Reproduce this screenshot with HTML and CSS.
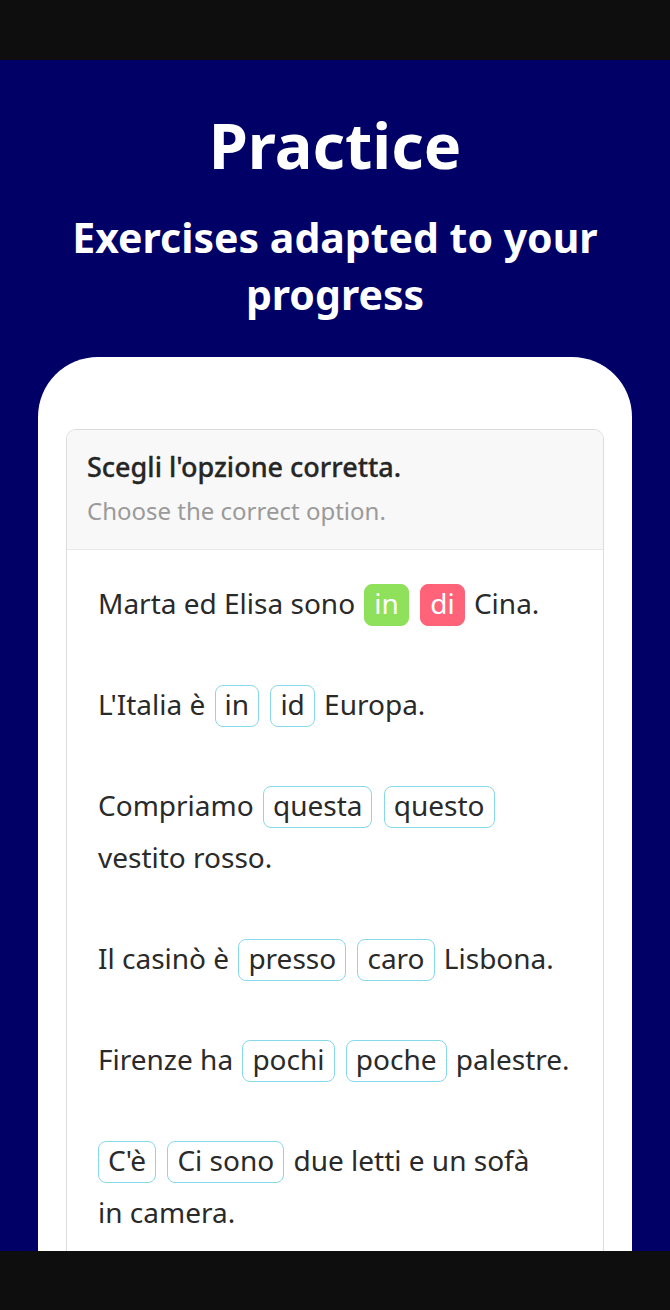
FILE: index.html
```html
<!DOCTYPE html>
<html lang="it">
<head>
<meta charset="utf-8">
<title>Practice</title>
<link rel="stylesheet" href="styles.css">
</head>
<body>
  <div class="statusbar"></div>
  <header class="hero">
    <h1 class="hero-title">Practice</h1>
    <p class="hero-sub">Exercises adapted to your progress</p>
  </header>
  <main class="sheet">
    <section class="card">
      <div class="card-head">
        <div class="card-title">Scegli l'opzione corretta.</div>
        <div class="card-hint">Choose the correct option.</div>
      </div>
      <div class="card-body">
        <p class="sentence">Marta ed Elisa sono <span class="chip chip-right">in</span> <span class="chip chip-wrong">di</span> Cina.</p>
        <p class="sentence">L'Italia è <span class="chip">in</span> <span class="chip">id</span> Europa.</p>
        <p class="sentence">Compriamo <span class="chip">questa</span> <span class="chip">questo</span> vestito rosso.</p>
        <p class="sentence">Il casinò è <span class="chip">presso</span> <span class="chip">caro</span> Lisbona.</p>
        <p class="sentence">Firenze ha <span class="chip">pochi</span> <span class="chip">poche</span> palestre.</p>
        <p class="sentence"><span class="chip chip-first">C'è</span> <span class="chip">Ci sono</span> due letti e un sofà<br>in camera.</p>
      </div>
    </section>
  </main>
  <div class="navbar"></div>
</body>
</html>
```
FILE: styles.css
```css
html, body {
  margin: 0;
  padding: 0;
}
body {
  width: 670px;
  height: 1310px;
  overflow: hidden;
  background: #000066;
  font-family: "Noto Sans", "Open Sans", sans-serif;
  position: relative;
}
.statusbar {
  height: 60px;
  background: #0e0e0e;
}
.hero {
  text-align: center;
  color: #ffffff;
  padding: 43px 20px 0;
}
.hero-title {
  margin: 0 0 22px;
  font-size: 63px;
  line-height: 84px;
  font-weight: 700;
}
.hero-sub {
  margin: 0;
  font-size: 41px;
  line-height: 57px;
  font-weight: 700;
}
.sheet {
  margin: 34px 38px 0;
  background: #ffffff;
  border-radius: 60px 60px 0 0;
  padding: 72px 28px 0;
  height: 900px;
}
.card {
  border: 1px solid #dcdcdc;
  border-radius: 10px;
  overflow: hidden;
}
.card-head {
  background: #f8f8f8;
  border-bottom: 1px solid #e6e9ea;
  padding: 17px 20px 0;
  height: 102px;
}
.card-title {
  font-size: 27px;
  line-height: 40px;
  font-weight: 500;
  color: #262626;
  -webkit-text-stroke: 0.3px #262626;
}
.card-hint {
  font-size: 24px;
  line-height: 48px;
  color: #9a9a9a;
}
.card-body {
  padding: 27px 26px 0 31px;
}
.sentence {
  margin: 0 0 49px;
  font-size: 28px;
  line-height: 52px;
  color: #2a2a2a;
}
.chip {
  display: inline-block;
  height: 36px;
  line-height: 36px;
  padding: 0 9px 4px;
  margin: 0 2px;
  border: 1px solid #86d9ea;
  border-radius: 8px;
  vertical-align: middle;
  position: relative;
  top: -2px;
}
.chip-first {
  margin-left: 0;
}
.chip-right {
  background: #8fe05a;
  border-color: #8fe05a;
  color: #ffffff;
}
.chip-wrong {
  background: #fe6379;
  border-color: #fe6379;
  color: #ffffff;
}
.navbar {
  position: absolute;
  left: 0;
  right: 0;
  bottom: 0;
  height: 59px;
  background: #0e0e0e;
}
```
